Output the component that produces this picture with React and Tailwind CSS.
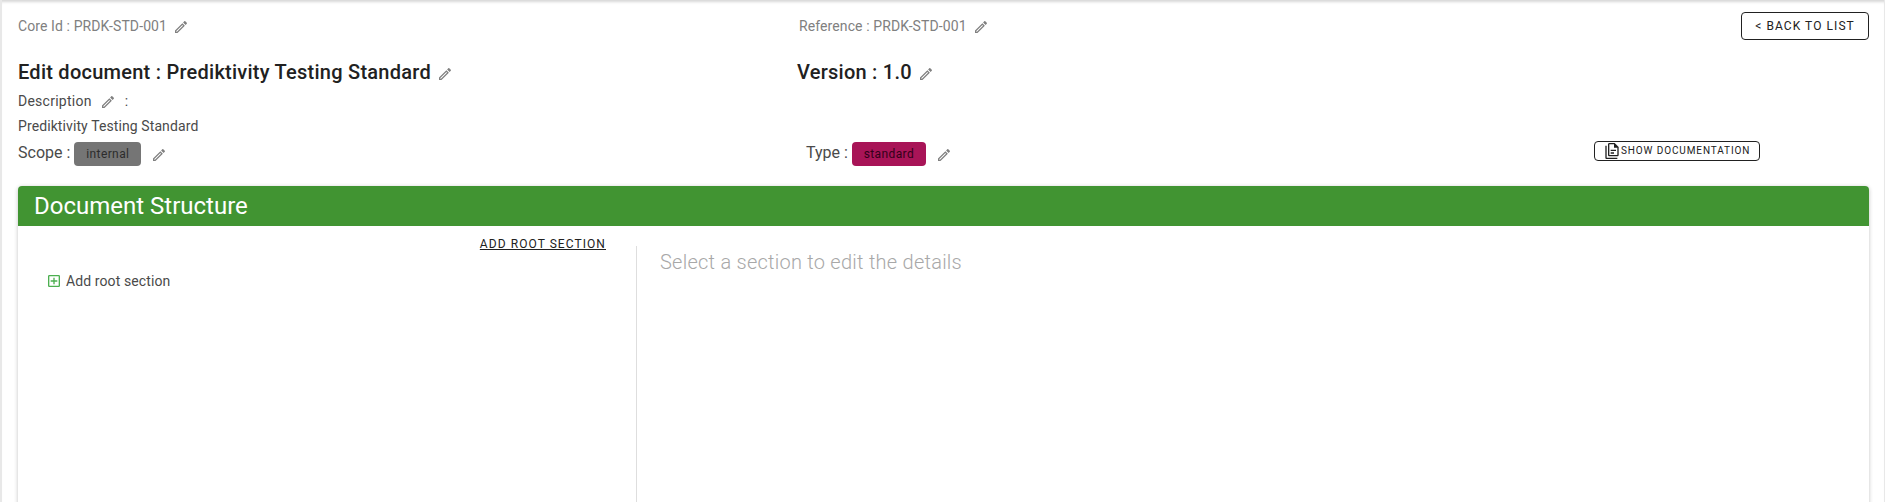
function Pencil({ className = "" }) {
  return (
    <svg viewBox="0 0 24 24" className={`h-4 w-4 shrink-0 fill-[#808080] ${className}`}>
      <path d="M14.06,9L15,9.94L5.92,19H5V18.08L14.06,9M17.66,3C17.41,3 17.15,3.1 16.96,3.29L15.13,5.12L18.88,8.87L20.71,7.04C21.1,6.65 21.1,6 20.71,5.63L18.37,3.29C18.17,3.09 17.92,3 17.66,3M14.06,6.19L3,17.25V21H6.75L17.81,9.94L14.06,6.19Z" />
    </svg>
  );
}

function DocumentsIcon() {
  return (
    <svg viewBox="0 0 24 24" className="h-4 w-4 shrink-0 fill-[#212121]">
      <path d="M16 0H8C6.9 0 6 .9 6 2V18C6 19.1 6.9 20 8 20H20C21.1 20 22 19.1 22 18V6L16 0M20 18H8V2H15V7H20V18M4 4V22H20V24H4C2.9 24 2 23.1 2 22V4H4M10 10V12H18V10H10M10 14V16H15V14H10Z" />
    </svg>
  );
}

function PlusBox() {
  return (
    <svg viewBox="0 0 24 24" className="h-4 w-4 shrink-0 fill-[#4caf50]">
      <path d="M19,19V5H5V19H19M19,3A2,2 0 0,1 21,5V19A2,2 0 0,1 19,21H5A2,2 0 0,1 3,19V5C3,3.89 3.9,3 5,3H19M11,7H13V11H17V13H13V17H11V13H7V11H11V7Z" />
    </svg>
  );
}

function DocumentHeader() {
  return (
    <header className="flex flex-col">
      <div className="mt-3 flex h-7 items-start text-sm leading-7 tracking-[0.1px] text-[#808080]">
        <div className="flex w-[781px] items-center">
          <span>Core Id : PRDK-STD-001</span>
          <Pencil className="ml-1.5 mt-0.5" />
        </div>
        <div className="flex flex-1 items-center">
          <span>Reference : PRDK-STD-001</span>
          <Pencil className="ml-1.5 mt-0.5" />
        </div>
        <button className="h-7 w-32 rounded border border-[#212121] text-xs leading-[26px] tracking-[1.07px] text-[#212121]">
          &lt; BACK TO LIST
        </button>
      </div>
      <div className="mt-4 flex h-8 items-center text-xl font-medium leading-8 tracking-[0.25px] text-[#212121]">
        <div className="flex w-[779px] items-center">
          <span>Edit document : Prediktivity Testing Standard</span>
          <Pencil className="ml-1.5 mt-1" />
        </div>
        <div className="flex items-center">
          <span>Version : 1.0</span>
          <Pencil className="ml-1.5 mt-1" />
        </div>
      </div>
      <div className="mt-px flex h-6 items-center text-sm tracking-[0.25px] text-[#4a4a4a]">
        <span>Description</span>
        <Pencil className="ml-2 mt-0.5" />
        <span className="ml-[9px]">:</span>
      </div>
      <div className="flex h-[26px] items-center text-sm tracking-[0.1px] text-[#4a4a4a]">
        Prediktivity Testing Standard
      </div>
      <div className="flex h-[30px] items-center text-base text-[#4a4a4a]">
        <div className="flex w-[788px] items-center">
          <span className="-mt-0.5">Scope :</span>
          <span className="ml-1 h-6 w-[67px] rounded bg-[#757575] text-center text-xs leading-6 tracking-[0.4px] text-[#2c2c2c]">internal</span>
          <Pencil className="ml-2.5 mt-0.5" />
        </div>
        <div className="flex flex-1 items-center">
          <span className="-mt-0.5">Type :</span>
          <span className="ml-1 h-6 w-[74px] rounded bg-[#a81457] text-center text-xs leading-6 tracking-[0.4px] text-[#330019]">standard</span>
          <Pencil className="ml-2.5 mt-0.5" />
        </div>
        <button className="-mt-1.5 mr-[109px] flex h-5 w-[166px] items-center gap-px rounded border border-[#212121] pl-[9px] text-[10px] leading-none tracking-[0.89px] text-[#212121]">
          <DocumentsIcon />
          <span>SHOW DOCUMENTATION</span>
        </button>
      </div>
    </header>
  );
}

function DocumentStructure() {
  return (
    <section className="mt-[17px] flex h-[330px] flex-col rounded bg-white shadow-[0_1px_4px_rgba(0,0,0,0.24)]">
      <h2 className="h-10 rounded-t bg-[#419432] pl-4 text-2xl leading-10 text-white">Document Structure</h2>
      <div className="flex flex-1">
        <div className="flex w-[618px] flex-col">
          <button className="mr-[30px] mt-[9px] self-end text-xs leading-[18px] tracking-[1.07px] text-[#212121] underline decoration-1 underline-offset-1">
            ADD ROOT SECTION
          </button>
          <div className="ml-7 mt-[18px] flex items-center gap-1 text-sm leading-5 tracking-[0.1px] text-[#4a4a4a]">
            <PlusBox />
            <span>Add root section</span>
          </div>
        </div>
        <div className="mt-5 flex-1 border-l border-[#dedede] pl-[23px]">
          <p className="text-xl font-light leading-8 tracking-[0.25px] text-[#a8a8a8]">Select a section to edit the details</p>
        </div>
      </div>
    </section>
  );
}

export default function App() {
  return (
    <div className="h-[502px] overflow-hidden border-l-2 border-[#e8e8e8] bg-white font-['Roboto',sans-serif]">
      <div className="h-[502px] border-r border-[#e8e8e8] px-4 pr-[15px] shadow-[inset_0_4px_3px_-2px_rgba(0,0,0,0.16)]">
        <div className="flow-root">
          <DocumentHeader />
          <DocumentStructure />
        </div>
      </div>
    </div>
  );
}
